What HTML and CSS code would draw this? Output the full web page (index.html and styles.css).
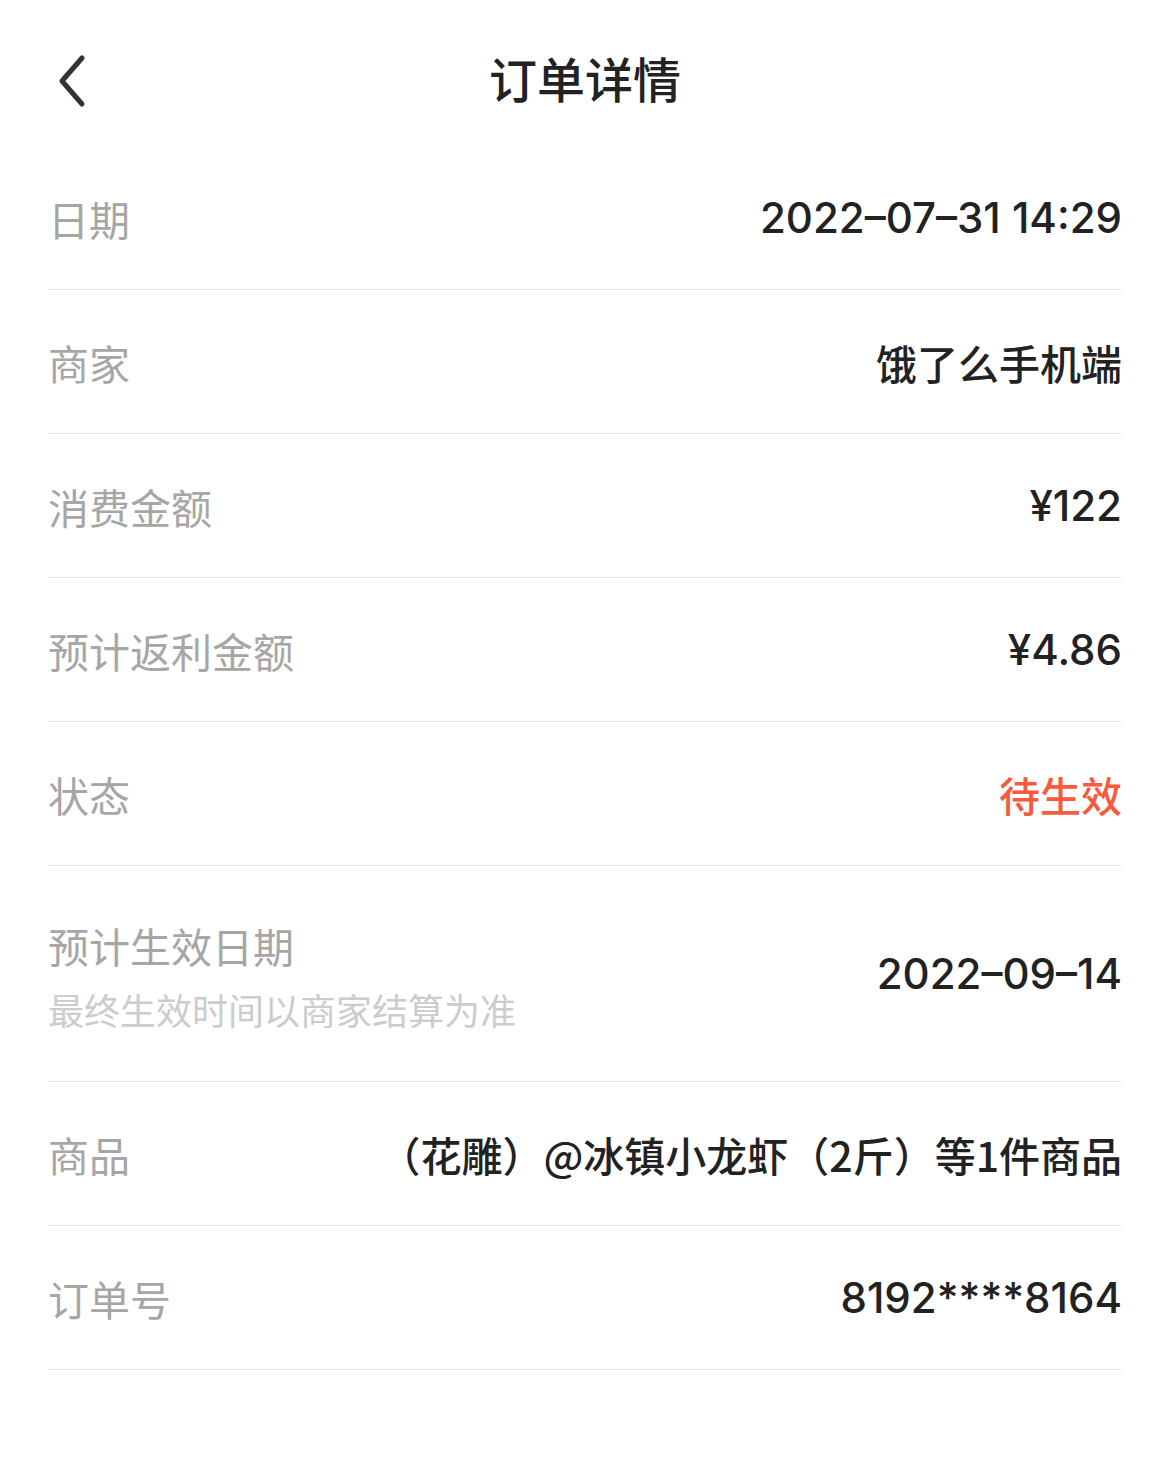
FILE: index.html
```html
<!DOCTYPE html>
<html lang="zh-CN">
<head>
    <meta charset="UTF-8">
    <meta name="viewport" content="width=device-width, initial-scale=1.0">
    <title>订单详情</title>
    <link rel="stylesheet" href="styles.css">
</head>
<body>
    <div class="header">
        <a class="back" href="#">
            <svg width="40" height="60" viewBox="0 0 40 60">
                <path d="M24 8 L4 31 L24 54" fill="none" stroke="#333" stroke-width="5" stroke-linecap="round" stroke-linejoin="round"/>
            </svg>
        </a>
        <div class="title">订单详情</div>
    </div>

    <div class="list">
        <div class="row">
            <div class="label">日期</div>
            <div class="value num">2022–07–31 14:29</div>
        </div>
        <div class="row">
            <div class="label">商家</div>
            <div class="value">饿了么手机端</div>
        </div>
        <div class="row">
            <div class="label">消费金额</div>
            <div class="value num">¥122</div>
        </div>
        <div class="row">
            <div class="label">预计返利金额</div>
            <div class="value num">¥4.86</div>
        </div>
        <div class="row">
            <div class="label">状态</div>
            <div class="value status">待生效</div>
        </div>
        <div class="row tall">
            <div class="label-group">
                <div class="label">预计生效日期</div>
                <div class="hint">最终生效时间以商家结算为准</div>
            </div>
            <div class="value num">2022–09–14</div>
        </div>
        <div class="row">
            <div class="label">商品</div>
            <div class="value">（花雕）@冰镇小龙虾（2斤）等1件商品</div>
        </div>
        <div class="row">
            <div class="label">订单号</div>
            <div class="value num">8192****8164</div>
        </div>
    </div>
</body>
</html>
```

FILE: styles.css
```css
* {
    margin: 0;
    padding: 0;
    box-sizing: border-box;
}

body {
    width: 1170px;
    background-color: #fff;
    font-family: "Noto Sans CJK SC", "Noto Sans", sans-serif;
    color: #222;
}

.header {
    position: relative;
    height: 146px;
    display: flex;
    align-items: center;
    justify-content: center;
    padding-top: 8px;
}

.back {
    position: absolute;
    left: 58px;
    top: 50px;
    display: block;
    width: 40px;
    height: 60px;
}

.title {
    font-size: 48px;
    font-weight: 500;
    color: #222;
}

.list {
    padding: 0 48px;
}

.row {
    height: 144px;
    display: flex;
    align-items: center;
    justify-content: space-between;
    border-bottom: 1px solid #e8e8e8;
}

.row.tall {
    height: 216px;
}

.label {
    font-size: 41px;
    color: #a6a6a6;
    white-space: nowrap;
}

.label-group .label {
    margin-top: 2px;
}

.hint {
    font-size: 36px;
    color: #cccccc;
    margin-top: 8px;
    white-space: nowrap;
}

.value {
    font-size: 41px;
    font-weight: 500;
    color: #222;
    white-space: nowrap;
}

.value.num {
    font-family: "Inter", "Noto Sans CJK SC", sans-serif;
    font-size: 42px;
    font-weight: 500;
}

.status {
    color: #f85a3e;
}
```
